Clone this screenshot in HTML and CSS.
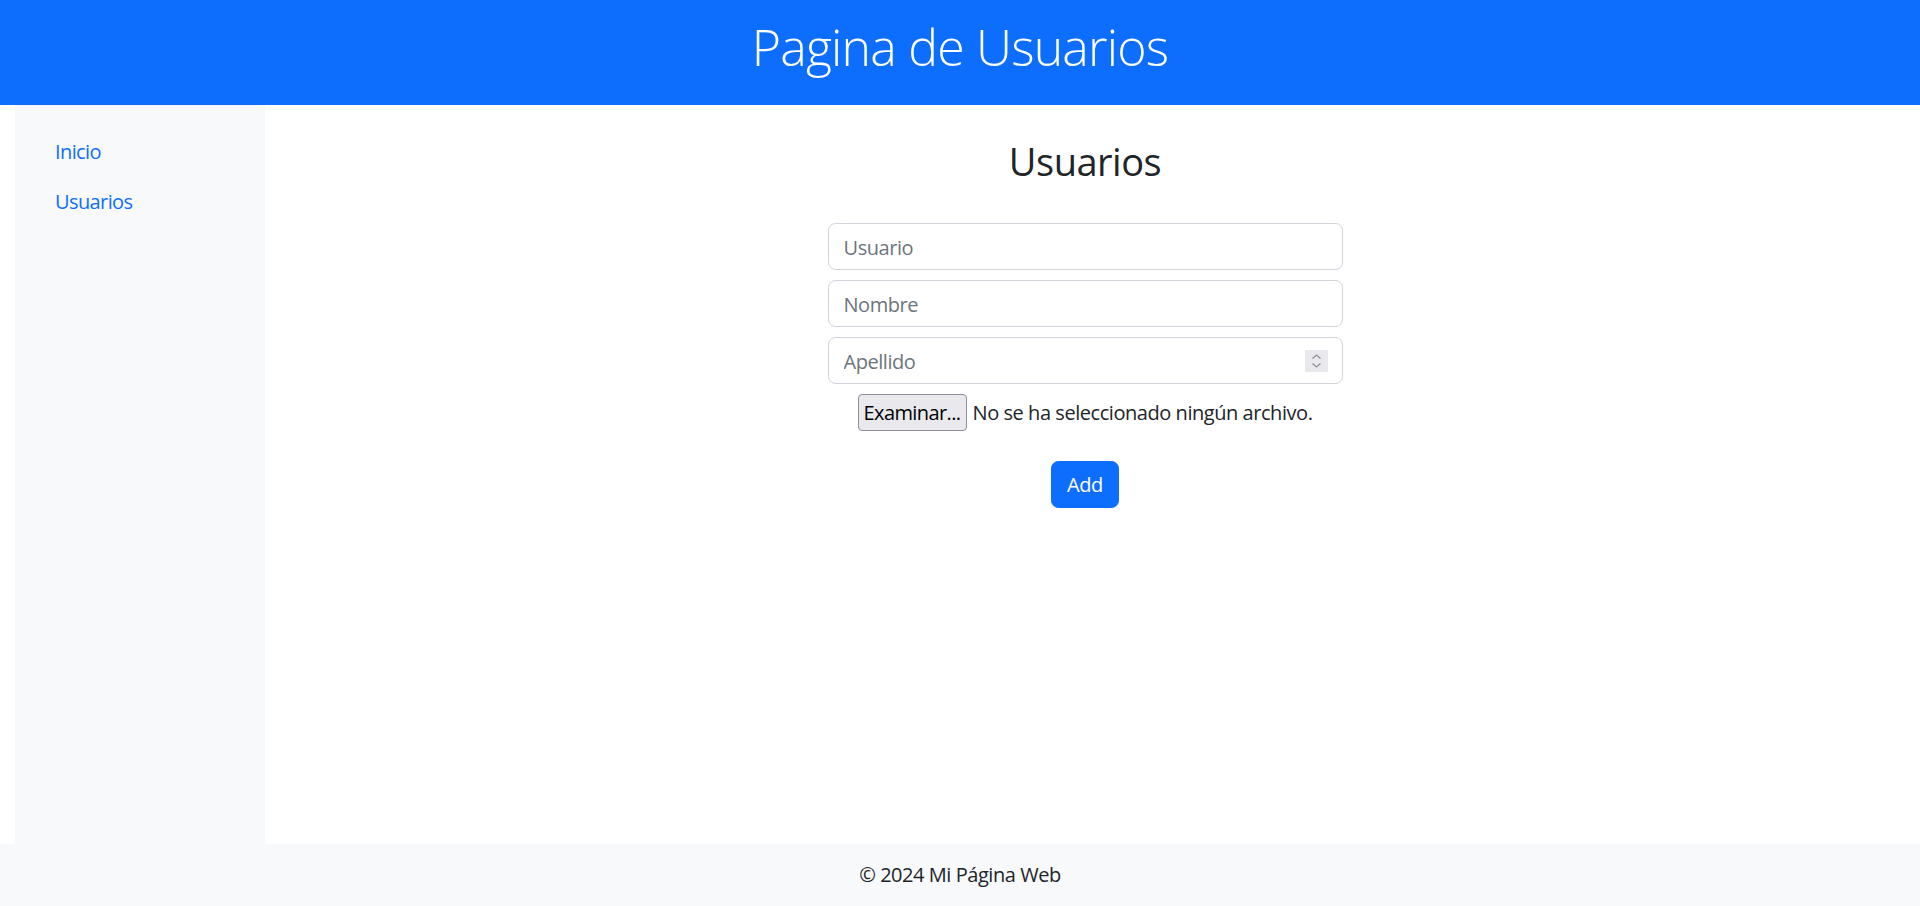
FILE: index.html
```html
<!DOCTYPE html>
<html lang="es">
<head>
<meta charset="utf-8">
<title>Pagina de Usuarios</title>
<link rel="stylesheet" href="styles.css">
</head>
<body>
<header class="site-header">
  <h1 class="site-title">Pagina de Usuarios</h1>
</header>
<div class="layout">
  <aside class="sidebar">
    <nav class="side-nav">
      <a class="nav-link" href="#">Inicio</a>
      <a class="nav-link" href="#">Usuarios</a>
    </nav>
  </aside>
  <main class="content">
    <h2 class="page-title">Usuarios</h2>
    <form class="user-form">
      <input class="form-control" type="text" placeholder="Usuario">
      <input class="form-control" type="text" placeholder="Nombre">
      <div class="number-wrap">
        <input class="form-control" type="text" placeholder="Apellido">
        <span class="spinner" aria-hidden="true">
          <svg width="23" height="22" viewBox="0 0 23 22">
            <path d="M7.5 8.5 L11.5 5 L15.5 8.5" fill="none" stroke="#8f8f9d" stroke-width="1.3"/>
            <path d="M7.5 13.5 L11.5 17 L15.5 13.5" fill="none" stroke="#8f8f9d" stroke-width="1.3"/>
          </svg>
        </span>
      </div>
      <div class="file-row">
        <button class="file-btn" type="button">Examinar...</button>
        <span class="file-label">No se ha seleccionado ningún archivo.</span>
      </div>
      <button class="btn-primary" type="button">Add</button>
    </form>
  </main>
</div>
<footer class="site-footer">© 2024 Mi Página Web</footer>
</body>
</html>
```
FILE: styles.css
```css
* { box-sizing: border-box; }
html, body { margin: 0; padding: 0; }
body {
  font-family: "Open Sans", "Noto Sans", sans-serif;
  font-size: 20px;
  line-height: 30px;
  letter-spacing: -0.45px;
  color: #212529;
  background: #fff;
  min-height: 100vh;
  display: flex;
  flex-direction: column;
}
.site-header {
  background: #0d6efd;
  height: 105px;
  padding-top: 17px;
  text-align: center;
}
.site-title {
  margin: 0;
  color: #fff;
  font-weight: 300;
  font-size: 50px;
  line-height: 60px;
  letter-spacing: -0.8px;
}
.layout {
  flex: 1;
  display: flex;
  padding: 0 15px;
}
.sidebar {
  width: 250px;
  flex: none;
  background: #f8f9fa;
  padding: 22px 20px;
}
.side-nav { display: flex; flex-direction: column; }
.nav-link {
  color: #0d6efd;
  text-decoration: none;
  padding: 10px 20px;
  letter-spacing: -0.6px;
}
.content {
  flex: 1;
  padding-top: 32px;
  display: flex;
  flex-direction: column;
  align-items: center;
}
.page-title {
  margin: 0 0 38px;
  font-size: 38px;
  line-height: 48px;
  font-weight: 400;
  letter-spacing: -0.5px;
}
.user-form {
  width: 515px;
  display: flex;
  flex-direction: column;
  align-items: center;
}
.form-control {
  display: block;
  width: 515px;
  height: 47px;
  margin: 0 0 10px;
  padding: 1px 15px 0;
  font-family: inherit;
  font-size: 20px;
  line-height: 30px;
  letter-spacing: -0.45px;
  color: #212529;
  background: #fff;
  border: 1px solid #ced4da;
  border-radius: 7.5px;
  outline: none;
}
.form-control::placeholder { color: #6c757d; opacity: 1; }
.number-wrap { position: relative; width: 515px; }
.spinner {
  position: absolute;
  right: 15px;
  top: 13px;
  width: 23px;
  height: 22px;
  background: #e9e9ed;
  display: block;
}
.spinner svg { display: block; }
.file-row {
  display: flex;
  align-items: center;
  height: 37px;
  margin-bottom: 30px;
}
.file-btn {
  height: 37px;
  padding: 0 5px;
  margin-right: 6px;
  font-family: inherit;
  font-size: 20px;
  letter-spacing: -0.6px;
  color: #000;
  background: #e9e9ed;
  border: 1px solid #8f8f9d;
  border-radius: 4px;
}
.file-label { white-space: nowrap; }
.btn-primary {
  height: 47px;
  padding: 0 15px;
  font-family: inherit;
  font-size: 20px;
  letter-spacing: -0.45px;
  color: #fff;
  background: #0d6efd;
  border: 1px solid #0d6efd;
  border-radius: 7.5px;
}
.site-footer {
  background: #f8f9fa;
  height: 62px;
  padding-top: 16px;
  text-align: center;
}
```
